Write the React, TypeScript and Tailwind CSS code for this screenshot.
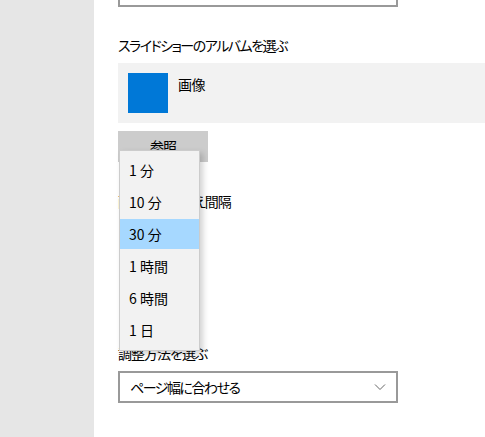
export default function App() {
  const intervals = ["1 分", "10 分", "30 分", "1 時間", "6 時間", "1 日"];
  const selected = 2;

  return (
    <div
      className="relative flex h-[437px] w-[485px] overflow-hidden bg-white text-[14px] tracking-[-1px] text-black [font-feature-settings:'palt'] antialiased"
      style={{ fontFamily: '"Noto Sans CJK JP", "Noto Sans", sans-serif' }}
    >
      <aside className="w-[94px] shrink-0 bg-[#e6e6e6]" />

      <main className="flex min-w-0 flex-1 flex-col pl-6">
        <div className="-mt-[25px] h-[32px] w-[280px] border-2 border-[#999999]" />

        <h3 className="mt-[27px] h-[22px] leading-[22px] tracking-[-1.5px]">スライドショーのアルバムを選ぶ</h3>

        <div className="mt-[7px] flex h-[60px] gap-[10px] bg-[#f2f2f2] p-[10px]">
          <div className="h-10 w-10 bg-[#0078d7]" />
          <span className="leading-[22px] tracking-[-0.5px]">画像</span>
        </div>

        <button className="mt-2 h-[31px] w-[90px] bg-[#cccccc]">参照</button>

        <p className="mt-[28px] leading-[22px]">画像の切り替え間隔</p>

        <p className="mt-[130px] leading-[22px]">調整方法を選ぶ</p>

        <div className="mt-[7px] flex h-[32px] w-[280px] items-center justify-between border-2 border-[#999999] pl-[10px] pr-[10px]">
          <span className="tracking-[-1.5px]">ページ幅に合わせる</span>
          <svg width="12" height="8" viewBox="0 0 12 8" fill="none" stroke="#666" strokeWidth="1">
            <path d="M1 1.5l5 5 5-5" />
          </svg>
        </div>
      </main>

      <ul className="absolute left-[119px] top-[150px] w-[81px] border border-[#cccccc] bg-[#f2f2f2] pb-[4px] pt-[3px] tracking-normal shadow-[3px_3px_6px_rgba(0,0,0,0.18)]">
        {intervals.map((label, i) => (
          <li
            key={label}
            className={
              i === selected
                ? "my-[1px] flex h-[30px] items-center bg-[#a6d8ff] pl-[9px]"
                : "flex h-[32px] items-center pl-[9px]"
            }
          >
            {label}
          </li>
        ))}
      </ul>
    </div>
  );
}
